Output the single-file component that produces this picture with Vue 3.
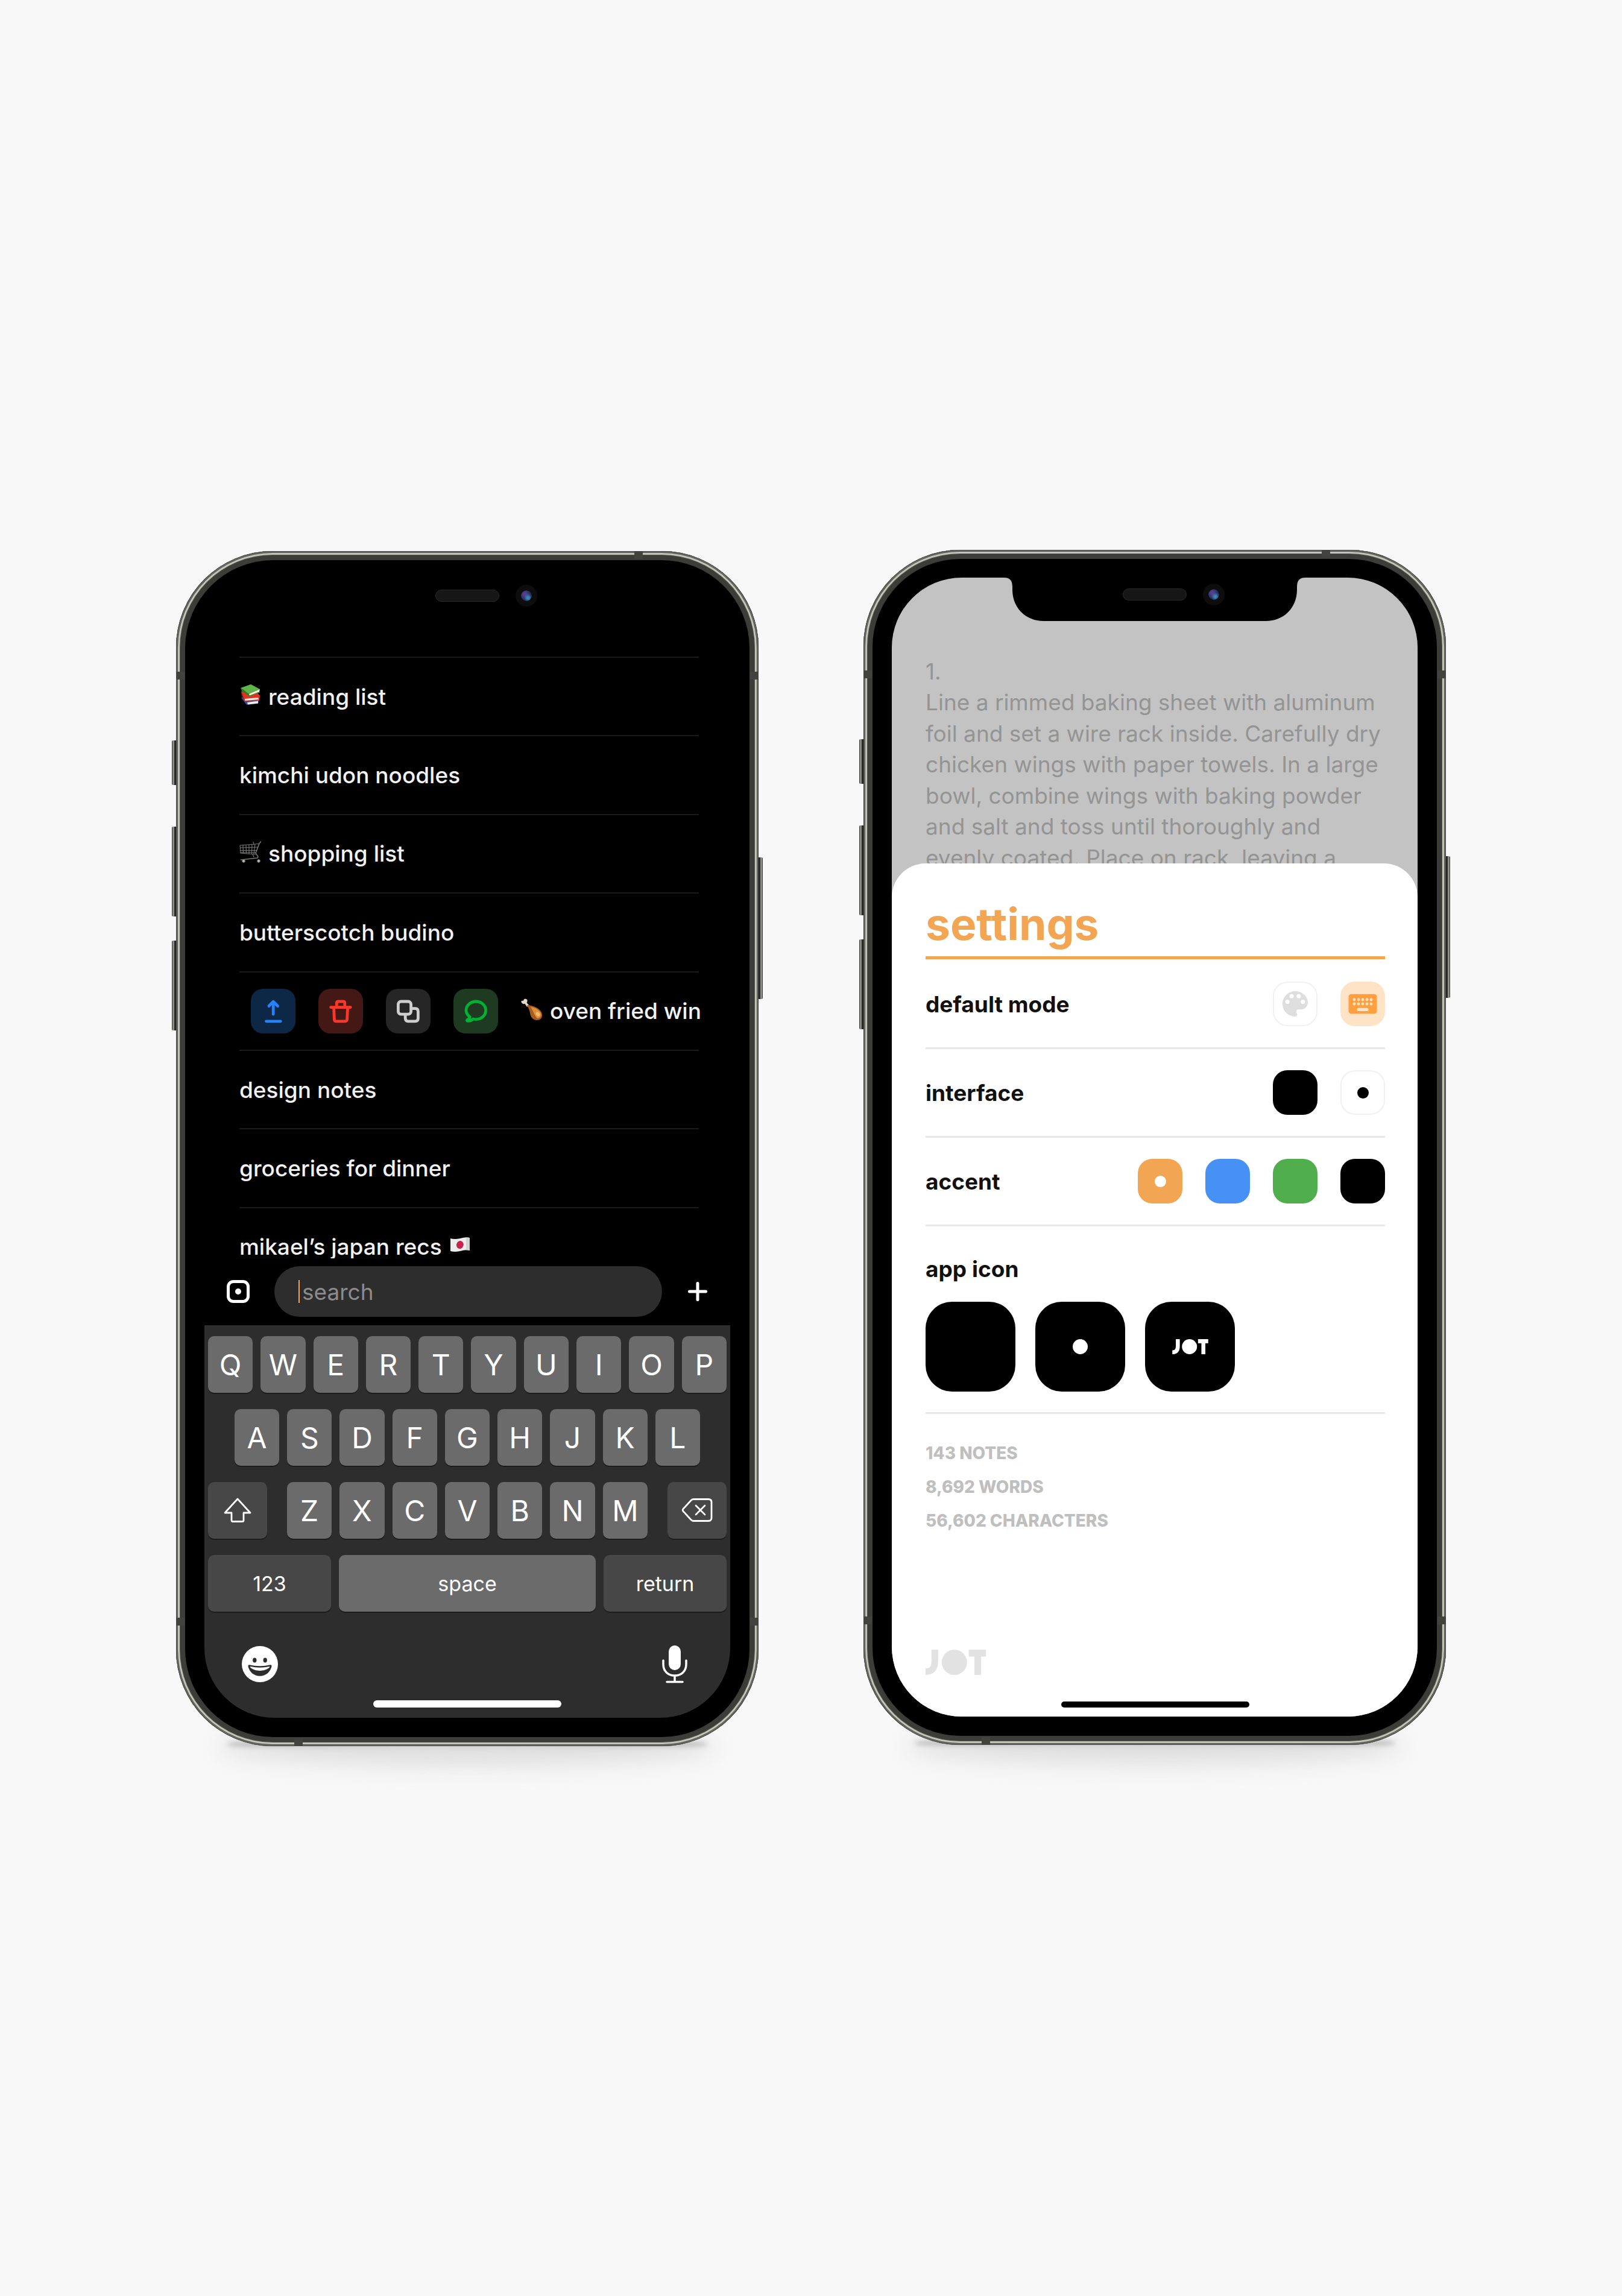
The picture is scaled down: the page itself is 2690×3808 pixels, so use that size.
<script setup>
import { ref } from 'vue'

const phones = ['notes', 'settings']

const notes = [
  { title: 'reading list', emoji: 'books' },
  { title: 'kimchi udon noodles' },
  { title: 'shopping list', emoji: 'cart' },
  { title: 'butterscotch budino' },
  { title: 'oven fried win', emoji: 'drumstick', open: true },
  { title: 'design notes' },
  { title: 'groceries for dinner' },
  { title: 'mikael’s japan recs', trailing: 'flag' },
]

const actions = [
  { name: 'share', label: 'Share note' },
  { name: 'trash', label: 'Delete note' },
  { name: 'copy', label: 'Duplicate note' },
  { name: 'chat', label: 'Send as message' },
]

const topKeys = 'QWERTYUIOP'.split('')
const homeKeys = 'ASDFGHJKL'.split('')
const bottomKeys = 'ZXCVBNM'.split('')
const keyColumns = [23, 30, 37, 44, 51]

const recipe = [
  '1.',
  'Line a rimmed baking sheet with aluminum',
  'foil and set a wire rack inside. Carefully dry',
  'chicken wings with paper towels. In a large',
  'bowl, combine wings with baking powder',
  'and salt and toss until thoroughly and',
  'evenly coated. Place on rack, leaving a',
].join('\n')

const stats = ['143 NOTES', '8,692 WORDS', '56,602 CHARACTERS']

const query = ref('')
const mode = ref('keyboard')
const theme = ref('white')
const accent = ref('orange')
const appIcon = ref('blank')
</script>

<template>
  <main class="stage">
    <section v-for="phone in phones" :key="phone" class="phone" :class="'phone--' + phone">
      <i class="side side--mute"></i>
      <i class="side side--up"></i>
      <i class="side side--down"></i>
      <i class="side side--power"></i>
      <div class="frame">
        <i class="band band--tl"></i>
        <i class="band band--tr"></i>
        <i class="band band--bl"></i>
        <i class="band band--br"></i>
        <i class="band band--top"></i>
        <i class="band band--bottom"></i>
        <div class="bezel">
          <div v-if="phone === 'notes'" class="screen screen--dark">
            <div class="clip">
              <ul class="notes">
                <li v-for="note in notes" :key="note.title" class="note" :class="{ 'note--open': note.open }">
                  <div v-if="note.open" class="actions">
                    <button
                      v-for="action in actions"
                      :key="action.name"
                      type="button"
                      class="action"
                      :class="'action--' + action.name"
                      :aria-label="action.label"
                    >
                      <svg viewBox="0 0 74 74" fill="none" stroke="currentColor" stroke-width="4.8" stroke-linecap="round" stroke-linejoin="round">
                        <path v-if="action.name === 'share'" d="M37.2 42V21.5M30 28.5L37.2 21.2L44.5 28.5M25.5 53.8H49.3" />
                        <path v-if="action.name === 'trash'" d="M20.6 30.6H53.2M30.3 30V23.8Q30.3 21 33 21H41Q43.8 21 43.8 23.8V30M25.6 31L26.4 50.6Q26.6 53.8 29.8 53.8H44.2Q47.4 53.8 47.6 50.6L48.6 31" />
                        <template v-if="action.name === 'copy'">
                          <rect x="20.4" y="21" width="21.2" height="21.2" rx="4.6" />
                          <path d="M42 32.6H48.6Q53.4 32.6 53.4 37.4V49Q53.4 53.8 48.6 53.8H37Q32.2 53.8 32.2 49V42.4" />
                        </template>
                        <path v-if="action.name === 'chat'" d="M27.4 46.6C23.4 43.8 21 40 21 35.8C21 27.5 28.4 21 37.4 21S53.6 27.5 53.6 35.8S46.6 50.6 37.4 50.6C35.8 50.6 34.2 50.4 32.8 50C29.8 52.6 26.8 54 23.2 53.2C22 52.8 22 52 23 51.4C25.2 50.2 26.8 48.8 27.4 46.6Z" />
                      </svg>
                    </button>
                  </div>
                  <svg v-if="note.emoji === 'books'" class="emoji" viewBox="0 0 36 36" role="img" aria-label="books">
                    <path d="M3 23L24 19L33 25L31 33L12 35Z" fill="#2f4fa8" />
                    <path d="M13 31L31 28.5L31 32.5L14 34.5Z" fill="#e9edf0" />
                    <path d="M3 13L26 11L34 20L33 28L9 29Z" fill="#e8301f" />
                    <path d="M3 13L9 29L7 26Q3 20 3 13Z" fill="#8f1d16" />
                    <path d="M9 25L31 23L32 26L9.500 28Z" fill="#f3efe9" />
                    <path d="M2 7L19 1L34 9L16 17Z" fill="#5fb54a" />
                    <path d="M2 7L16 17L16 21L4 12Z" fill="#2f7d2c" />
                    <path d="M16 17L34 9L33 13.500L17 19.600Z" fill="#f2f2ec" />
                    <path d="M16 20L34 13L34 14.500L16 21.500Z" fill="#3c8a35" />
                  </svg>
                  <svg v-if="note.emoji === 'cart'" class="emoji" viewBox="0 0 36 36" role="img" aria-label="shopping cart">
                    <g fill="none" stroke="#777" stroke-width="1.100">
                      <path d="M36 0.500L33 4L27 20L29 23Q32 26 30 28L2 31" stroke-width="1.600" />
                      <path d="M1 7L32 4.500M1 7L2 20L27 22M1 11L31 10M1.500 15.500L29 15.500M2 18.500L28 19" />
                      <path d="M6 7L6.500 20M11 6.500L11.500 20.500M16 6L16 21M21 5.500L20.500 21.500M26 5L24 22M23 1L24 6M22 22L24 27" />
                    </g>
                    <g fill="#bbb" stroke="#665" stroke-width="1"><circle cx="7" cy="33" r="2.400" /><circle cx="32" cy="33" r="2.400" /></g>
                  </svg>
                  <svg v-if="note.emoji === 'drumstick'" class="emoji" viewBox="0 0 36 36" role="img" aria-label="drumstick">
                    <path d="M1 7Q-1 3 4 4Q5 -1 9 1Q12 3 9.500 7L13 11L10 14L6.500 8.800Q3 10 1 7Z" fill="#e4d6c8" />
                    <path d="M10 12Q12 10 15 11.500C23 13 31 17 34 23C37 29 34 36 27 36C19 36 16 30 15 24C14 18 12 15 10 12Z" fill="#a85c1c" />
                    <path d="M16 14C24 15 31 19 33 25C34 30 31 33 27 33C23 30 20 20 16 14Z" fill="#dc8f3c" />
                    <ellipse cx="28" cy="26" rx="3" ry="4" fill="#f3b868" transform="rotate(-35 28 26)" />
                  </svg>
                  <span class="title">{{ note.title }}</span>
                  <svg v-if="note.trailing === 'flag'" class="emoji emoji--after" viewBox="0 0 36 36" role="img" aria-label="flag of Japan">
                    <path d="M2 7Q9 9 18 7Q27 4 34 6V27Q27 25 18 28Q9 30 2 28Z" fill="#ececec" />
                    <path d="M28 5.200Q31 5 34 6V27Q31 26 28 26.300Z" fill="#d2d2d2" />
                    <ellipse cx="18" cy="17.500" rx="5.800" ry="6.600" fill="#c6244b" transform="rotate(18 18 17)" />
                  </svg>
                </li>
              </ul>
            </div>

            <div class="searchbar">
              <button type="button" class="plain" aria-label="Menu">
                <svg width="38" height="38" viewBox="0 0 38 38">
                  <rect x="2.500" y="2.500" width="33" height="33" rx="8.500" fill="none" stroke="#fff" stroke-width="5" />
                  <circle cx="19" cy="19" r="5" fill="#fff" />
                </svg>
              </button>
              <label class="search">
                <i class="caret"></i>
                <input v-model="query" type="text" placeholder="search" aria-label="Search notes" />
              </label>
              <button type="button" class="plain" aria-label="New note">
                <svg width="36" height="36" viewBox="0 0 36 36"><path d="M18 4.500V31.500M4.500 18H31.500" stroke="#fff" stroke-width="5" stroke-linecap="round" /></svg>
              </button>
            </div>

            <div class="keyboard">
              <div class="keys">
                <button v-for="k in topKeys" :key="k" type="button" class="key">{{ k }}</button>
              </div>
              <div class="keys keys--home">
                <button v-for="k in homeKeys" :key="k" type="button" class="key">{{ k }}</button>
              </div>
              <div class="keys keys--bottom">
                <button type="button" class="key key--dark key--side" aria-label="Shift">
                  <svg width="46" height="42" viewBox="0 0 46 42"><path d="M23 2L44 25H33V37.500Q33 39.500 31 39.500H15Q13 39.500 13 37.500V25H2Z" fill="none" stroke="#fff" stroke-width="2.800" stroke-linejoin="round" /></svg>
                </button>
                <div class="keys keys--fill">
                  <button v-for="k in bottomKeys" :key="k" type="button" class="key">{{ k }}</button>
                </div>
                <button type="button" class="key key--dark key--side" aria-label="Backspace">
                  <svg width="52" height="42" viewBox="0 0 52 42" fill="none" stroke="#fff" stroke-width="2.800" stroke-linecap="round" stroke-linejoin="round">
                    <path d="M16.500 4Q18 2.500 20 2.500H45Q50 2.500 50 7.500V33.500Q50 38.500 45 38.500H20Q18 38.500 16.500 37L3 22.500Q1.500 20.500 3 18.500Z" />
                    <path d="M24 13L39 28M39 13L24 28" />
                  </svg>
                </button>
              </div>
              <div class="keys">
                <button type="button" class="key key--dark key--wide">123</button>
                <button type="button" class="key key--word">space</button>
                <button type="button" class="key key--dark key--wide">return</button>
              </div>
              <div class="foot">
                <button type="button" class="plain" aria-label="Emoji">
                  <svg width="60" height="60" viewBox="-30 -30 60 60">
                    <circle r="30" fill="#fff" />
                    <g fill="#2d2d2d">
                      <ellipse cx="-8.700" cy="-6.500" rx="3.200" ry="4" />
                      <ellipse cx="8.700" cy="-6.500" rx="3.200" ry="4" />
                      <path d="M-17.500 1.200Q0 5.500 17.500 1.200Q20 1 19.500 3.500C17.500 13 10 19.700 0 19.700S-17.500 13 -19.500 3.500Q-20 1 -17.500 1.200Z" />
                    </g>
                    <path d="M-15.800 4Q0 7.600 15.800 4Q16.800 4 16 5.300C12 9.300 6 11 0 11S-12 9.300 -16 5.300Q-16.800 4 -15.800 4Z" fill="#fff" />
                  </svg>
                </button>
                <button type="button" class="plain" aria-label="Dictate">
                  <svg width="42" height="64" viewBox="0 0 42 64" fill="none" stroke="#fff" stroke-width="3.500" stroke-linecap="round">
                    <rect x="11" y="1" width="20" height="41" rx="10" fill="#fff" stroke="none" />
                    <path d="M2 26V32C2 44 10 51 21 51S40 44 40 32V26M21 51V61M8 61.500H34" />
                  </svg>
                </button>
              </div>
              <i class="home"></i>
            </div>
          </div>

          <div v-else class="screen screen--light">
            <p class="recipe">{{ recipe }}</p>
            <form class="sheet" @submit.prevent>
              <h1>settings</h1>
              <div class="row" role="radiogroup" aria-label="default mode">
                <span>default mode</span>
                <div class="tiles">
                  <label class="tile tile--outline">
                    <input v-model="mode" class="hidden" type="radio" name="mode" value="draw" aria-label="Draw" />
                    <svg viewBox="0 0 74 74">
                      <path transform="translate(9 9) scale(2.333)" fill="#dedede" d="M12 3c-4.970 0-9 4.030-9 9s4.030 9 9 9c.830 0 1.500-.670 1.500-1.500 0-.390-.150-.740-.390-1.010-.230-.260-.380-.610-.380-.990 0-.830.670-1.500 1.500-1.500H16c2.760 0 5-2.240 5-5 0-4.420-4.030-8-9-8z" />
                      <g fill="#fff"><circle cx="24" cy="33.600" r="3.500" /><circle cx="31.100" cy="24.200" r="3.500" /><circle cx="42.800" cy="24.200" r="3.500" /><circle cx="49.800" cy="33.600" r="3.500" /></g>
                    </svg>
                  </label>
                  <label class="tile tile--picked">
                    <input v-model="mode" class="hidden" type="radio" name="mode" value="keyboard" aria-label="Keyboard" />
                    <svg viewBox="0 0 74 74">
                      <rect x="13.500" y="20.700" width="47" height="32.600" rx="4.500" fill="#ffa040" />
                      <g fill="#ffe3c6">
                        <template v-for="cx in keyColumns" :key="cx"><circle :cx="cx" cy="30" r="2.400" /><circle :cx="cx" cy="37" r="2.400" /></template>
                        <rect x="27.500" y="43.800" width="19" height="5.200" rx="2.600" />
                      </g>
                    </svg>
                  </label>
                </div>
              </div>
              <div class="row" role="radiogroup" aria-label="interface">
                <span>interface</span>
                <div class="tiles">
                  <input v-model="theme" class="tile tile--black" type="radio" name="theme" value="black" aria-label="Black" />
                  <input v-model="theme" class="tile tile--outline" type="radio" name="theme" value="white" aria-label="White" />
                </div>
              </div>
              <div class="row" role="radiogroup" aria-label="accent">
                <span>accent</span>
                <div class="tiles">
                  <input v-model="accent" class="tile tile--orange" type="radio" name="accent" value="orange" aria-label="Orange" />
                  <input v-model="accent" class="tile tile--blue" type="radio" name="accent" value="blue" aria-label="Blue" />
                  <input v-model="accent" class="tile tile--green" type="radio" name="accent" value="green" aria-label="Green" />
                  <input v-model="accent" class="tile tile--black" type="radio" name="accent" value="black" aria-label="Black" />
                </div>
              </div>
              <div class="icons" role="radiogroup" aria-label="app icon">
                <span>app icon</span>
                <div class="icons__list">
                  <label class="icon"><input v-model="appIcon" class="hidden" type="radio" name="icon" value="blank" aria-label="Blank" /></label>
                  <label class="icon">
                    <input v-model="appIcon" class="hidden" type="radio" name="icon" value="dot" aria-label="Dot" />
                    <svg width="25" height="25" viewBox="0 0 25 25"><circle cx="12.500" cy="12.500" r="12.500" fill="#fff" /></svg>
                  </label>
                  <label class="icon">
                    <input v-model="appIcon" class="hidden" type="radio" name="icon" value="jot" aria-label="Jot" />
                    <svg class="logo" width="60" height="25" viewBox="0 0 100 42">
                      <path d="M15.300 0V20Q15.300 36.500 0 36.500" fill="none" stroke="currentColor" stroke-width="11" />
                      <circle cx="47.800" cy="21" r="21" fill="currentColor" />
                      <rect x="71.600" width="28.400" height="11.500" fill="currentColor" /><rect x="81" width="11" height="42" fill="currentColor" />
                    </svg>
                  </label>
                </div>
              </div>
              <ul class="stats">
                <li v-for="s in stats" :key="s">{{ s }}</li>
              </ul>
              <svg class="logo logo--mark" width="100" height="42" viewBox="0 0 100 42" role="img" aria-label="Jot">
                <path d="M15.300 0V20Q15.300 36.500 0 36.500" fill="none" stroke="currentColor" stroke-width="11" />
                <circle cx="47.800" cy="21" r="21" fill="currentColor" />
                <rect x="71.600" width="28.400" height="11.500" fill="currentColor" /><rect x="81" width="11" height="42" fill="currentColor" />
              </svg>
              <i class="home home--black"></i>
            </form>
          </div>
        </div>
        <div class="notch">
          <svg viewBox="0 0 500 72"><path d="M0 0C11 0 14 6 14 16V20C14 50 36 72 66 72H434C464 72 486 50 486 20V16C486 6 489 0 500 0Z" /></svg>
          <i class="speaker"></i>
          <i class="camera"></i>
        </div>
      </div>
    </section>
  </main>
</template>

<style>
body {
  margin: 0;
  background: #f8f8f8;
}
</style>

<style scoped>
* {
  box-sizing: border-box;
}
.stage {
  display: flex;
  justify-content: center;
  align-content: center;
  flex-wrap: wrap;
  align-items: flex-start;
  gap: 174px;
  min-height: 100vh;
  font-family: Inter, "Liberation Sans", sans-serif;
  font-size: 37px;
}
ul {
  margin: 0;
  padding: 0;
  list-style: none;
}
i {
  display: block;
}
button {
  border: 0;
  padding: 0;
  font: inherit;
  color: inherit;
  cursor: pointer;
}
svg {
  display: block;
}
.plain {
  background: none;
}
.hidden {
  position: absolute;
  opacity: 0;
  margin: 0;
}

/* Device shell */
.phone {
  position: relative;
  isolation: isolate;
  flex: 0 1 966px;
  min-width: 0;
}
.phone--notes {
  margin-top: 2px;
}
.phone::before,
.phone::after {
  content: "";
  position: absolute;
  z-index: -1;
}
.phone::before {
  left: 84px;
  right: 84px;
  bottom: -3px;
  height: 12px;
  border-radius: 50%;
  background: #555;
  filter: blur(4px);
}
.phone::after {
  left: 70px;
  right: 70px;
  bottom: -32px;
  height: 60px;
  border-radius: 50%;
  background: #dedede;
  filter: blur(18px);
}
.frame {
  position: relative;
  padding: 15px;
  border-radius: 160px;
  background: #3c3c39;
  box-shadow:
    inset 0 0 0 1px #383936,
    inset 0 0 0 2px #84857e,
    inset 0 0 0 3px #454642,
    inset 0 0 0 6px #c2c3b9,
    inset 0 0 0 7px #55564f;
}
.bezel {
  padding: 31px 32px 32px;
  border-radius: 146px;
  background: #000;
}
.side {
  position: absolute;
  z-index: -1;
  left: -7px;
  width: 12px;
  border-radius: 2px;
  background: linear-gradient(90deg, #3a3b38 0 1px, #8b8c84 1px 4px, #2b2c29 4px);
}
.side--mute {
  top: 314px;
  height: 74px;
}
.side--up {
  top: 457px;
  height: 149px;
}
.side--down {
  top: 646px;
  height: 149px;
}
.side--power {
  top: 508px;
  left: auto;
  right: -7px;
  height: 235px;
  background: linear-gradient(270deg, #3a3b38 0 1px, #8b8c84 1px 4px, #2b2c29 4px);
}
.band {
  position: absolute;
  width: 14px;
  height: 13px;
  background: #42433f;
}
.band--tl,
.band--tr {
  top: 200px;
}
.band--bl,
.band--br {
  bottom: 200px;
}
.band--tl,
.band--bl {
  left: 0;
}
.band--tr,
.band--br {
  right: 0;
}
.band--top {
  top: 0;
  right: 192px;
}
.band--bottom {
  bottom: 0;
  left: 196px;
}
.notch {
  position: absolute;
  top: 46px;
  left: 50%;
  width: 500px;
  height: 72px;
  margin-left: -250px;
}
.speaker {
  position: absolute;
  top: 18px;
  left: 197px;
  width: 106px;
  height: 20px;
  border: 1px solid #2a2a2a;
  border-radius: 10px;
  background: #161616;
}
.camera {
  position: absolute;
  top: 10px;
  right: 134px;
  width: 36px;
  height: 36px;
  border: 9px solid #0d0d0e;
  border-radius: 50%;
  background: radial-gradient(circle at 65% 70%, #3c86b4 0 10%, transparent 40%), radial-gradient(circle at 35% 35%, #54418a 0 12%, #1c2c5c 60%, #16305a);
  background-clip: padding-box;
}
.screen {
  display: flex;
  flex-direction: column;
  min-height: 1889px;
  overflow: hidden;
  border-radius: 116px;
}

/* Notes list */
.screen--dark {
  padding-top: 129px;
  background: #000;
  color: #f1f1f1;
}
.clip {
  height: 998px;
  overflow: hidden;
}
.notes {
  display: flex;
  flex-direction: column;
  height: 1043px;
  margin: 0 52px 0 58px;
}
.note {
  display: flex;
  flex: 1;
  align-items: center;
  border-top: 2px solid #1b1b1b;
  white-space: nowrap;
}
.note--open {
  padding-left: 19px;
}
.title {
  font-weight: 500;
}
.emoji {
  flex: none;
  width: 36px;
  height: 36px;
  margin: 0 12px 6px 0;
}
.emoji--after {
  margin: 0 0 6px 12px;
}
.actions {
  display: flex;
  gap: 38px;
  margin-right: 38px;
}
.action {
  width: 74px;
  height: 74px;
  border-radius: 20px;
}
.action--share {
  background: #0d2747;
  color: #2383ff;
}
.action--trash {
  background: #441815;
  color: #f9382b;
}
.action--copy {
  background: #262626;
  color: #cecece;
}
.action--chat {
  background: #1e3a20;
  color: #00b136;
}
.searchbar {
  display: flex;
  align-items: center;
  gap: 41px;
  padding: 13px 36px 14px 37px;
}
.search {
  display: flex;
  flex: 1;
  align-items: center;
  height: 84px;
  padding-left: 40px;
  border-radius: 42px;
  background: #2d2d2d;
}
.caret {
  width: 2px;
  height: 38px;
  margin-right: 4px;
  background: #f2a654;
}
.search input {
  flex: 1;
  min-width: 0;
  padding: 0;
  border: 0;
  outline: 0;
  background: none;
  color: #fff;
  font: inherit;
}
.search input::placeholder {
  color: #8b8b8b;
  opacity: 1;
}

/* Keyboard */
.keyboard {
  display: flex;
  flex: 1;
  flex-direction: column;
  gap: 27px;
  padding: 18px 6px 16px;
  background: #2d2d2d;
  color: #fff;
}
.keys {
  display: flex;
  gap: 13px;
}
.keys--home {
  padding: 0 44px;
}
.keys--bottom {
  gap: 33px;
}
.keys--fill {
  flex: 1;
}
.key {
  display: flex;
  flex: 1;
  align-items: center;
  justify-content: center;
  height: 94px;
  border-radius: 10px;
  background: #6b6b6b;
  box-shadow: 0 2px 0 #1c1c1c;
  font-size: 48px;
}
.key--dark {
  background: #474747;
}
.key--side {
  flex: 0 0 98px;
}
.key--wide {
  flex: 0 0 204px;
}
.key--wide,
.key--word {
  font-size: 34px;
}
.foot {
  display: flex;
  align-items: center;
  justify-content: space-between;
  height: 66px;
  margin-top: 27px;
  padding: 0 65px 0 56px;
}
.home {
  align-self: center;
  flex: none;
  width: 312px;
  height: 12px;
  border-radius: 6px;
  background: #fff;
}

/* Settings sheet */
.screen--light {
  padding-top: 130px;
  background: #c3c3c3;
}
.recipe {
  height: 344px;
  margin: 0;
  padding-left: 56px;
  overflow: hidden;
  color: #949494;
  line-height: 1.39;
  white-space: pre;
}
.sheet {
  display: flex;
  flex: 1;
  flex-direction: column;
  padding: 59px 54px 15px 56px;
  border-radius: 56px 56px 0 0;
  background: #fff;
  color: #111;
  font-weight: 700;
}
h1 {
  margin: 0 0 2px;
  padding-bottom: 11px;
  border-bottom: 5px solid #f2a654;
  color: #f2a654;
  font-size: 73px;
  line-height: 84px;
}
.row {
  display: flex;
  align-items: center;
  justify-content: space-between;
  height: 147px;
  border-bottom: 3px solid #e8e8e8;
}
.tiles {
  display: flex;
  gap: 38px;
}
.tile {
  appearance: none;
  display: grid;
  place-items: center;
  width: 74px;
  height: 74px;
  margin: 0;
  border-radius: 24px;
  cursor: pointer;
}
.tile svg {
  width: 74px;
  height: 74px;
}
.tile--outline {
  box-shadow: inset 0 0 0 2px #f1f1f1;
}
.tile--picked {
  background: #ffe3c6;
}
.tile--black {
  background: #000;
}
.tile--orange {
  background: #f2a654;
}
.tile--blue {
  background: #4791f5;
}
.tile--green {
  background: #50ae4d;
}
input.tile:checked::after {
  content: "";
  width: 19px;
  height: 19px;
  border-radius: 50%;
  background: #fff;
}
input.tile--outline:checked::after {
  background: #000;
}
.icons {
  display: flex;
  flex-direction: column;
  gap: 31px;
  padding: 48px 0 34px;
  border-bottom: 3px solid #e8e8e8;
  line-height: 46px;
}
.icons__list {
  display: flex;
  gap: 33px;
}
.icon {
  display: grid;
  place-items: center;
  width: 149px;
  height: 149px;
  border-radius: 44px;
  background: #000;
}
.logo {
  color: #fff;
}
.logo--mark {
  margin: auto 0 44px;
  color: #e2e2e2;
}
.stats {
  margin-top: 37px;
  color: #bfbfbf;
  font-size: 28px;
  font-weight: 800;
  line-height: 56px;
}
.home--black {
  height: 10px;
  background: #000;
}
</style>
